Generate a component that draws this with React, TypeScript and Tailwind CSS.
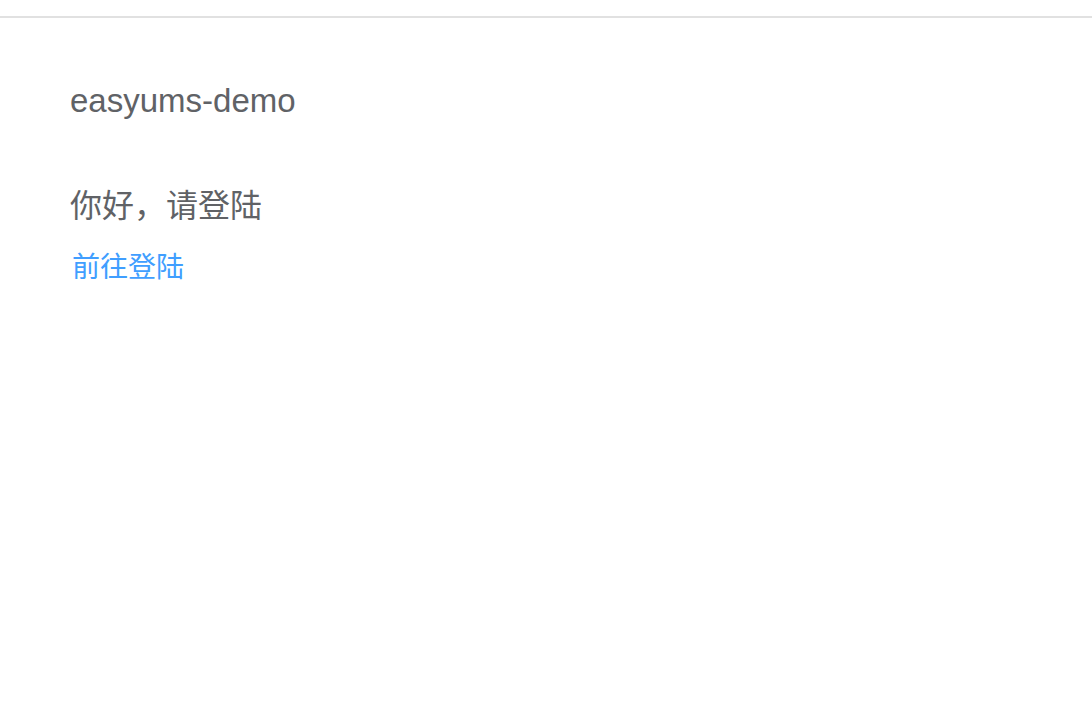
export default function App() {
  return (
    <div className="w-[1092px] h-[704px] bg-white" style={{ fontFamily: '"Liberation Sans", "Noto Sans CJK SC", sans-serif' }}>
      <div className="h-[18px] border-b-2 border-[#e1e1e1]" />
      <div className="pl-[70px]">
        <div className="mt-[65px] text-[33px] leading-[36px] text-[#606266]">easyums-demo</div>
        <div className="mt-[68px] text-[32px] leading-[38px] text-[#606266]">你好，请登陆</div>
        <div className="mt-[27px] pl-[2px] text-[28px] leading-[32px] text-[#409eff]">前往登陆</div>
      </div>
    </div>
  );
}
